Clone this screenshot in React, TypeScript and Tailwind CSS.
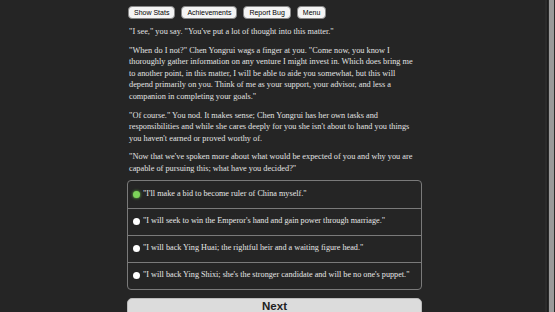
import React from 'react';

const paragraphs = [
  '"I see," you say. "You\'ve put a lot of thought into this matter."',
  '"When do I not?" Chen Yongrui wags a finger at you. "Come now, you know I thoroughly gather information on any venture I might invest in. Which does bring me to another point, in this matter, I will be able to aide you somewhat, but this will depend primarily on you. Think of me as your support, your advisor, and less a companion in completing your goals."',
  '"Of course." You nod. It makes sense; Chen Yongrui has her own tasks and responsibilities and while she cares deeply for you she isn\'t about to hand you things you haven\'t earned or proved worthy of.',
  '"Now that we\'ve spoken more about what would be expected of you and why you are capable of pursuing this; what have you decided?"',
];

const choices = [
  '"I\'ll make a bid to become ruler of China myself."',
  '"I will seek to win the Emperor\'s hand and gain power through marriage."',
  '"I will back Ying Huai; the rightful heir and a waiting figure head."',
  '"I will back Ying Shixi; she\'s the stronger candidate and will be no one\'s puppet."',
];

export default function App() {
  return (
    <div className="flex h-[312px] w-full overflow-hidden bg-[#252525]">
      <div className="flex-1 overflow-hidden">
        <div className="ml-[127px] w-[295px] pt-[6px]">
          <div className="flex gap-[6px] pl-px font-['Liberation_Sans',sans-serif] text-[7px] text-black">
            {['Show Stats', 'Achievements', 'Report Bug', 'Menu'].map((b) => (
              <button
                key={b}
                className="h-[13px] rounded-[4px] border border-[#888] bg-[#f4f4f4] px-[5px] leading-none"
              >
                {b}
              </button>
            ))}
          </div>

          <div className="mt-[7px] space-y-[7px] px-[2px] font-['Liberation_Serif',serif] text-[8.3px] leading-[11.6px] text-[#e2e2e2]">
            {paragraphs.map((p, i) => (
              <p key={i}>{p}</p>
            ))}
          </div>

          <div className="mt-[5px] rounded-[4px] border border-[#7a7a7a] font-['Liberation_Serif',serif] text-[8.2px] text-[#e6e6e6]">
            {choices.map((c, i) => (
              <div
                key={i}
                className={`flex h-[27px] items-center gap-[3px] pl-[5px] ${i > 0 ? 'border-t border-[#7a7a7a]' : ''}`}
              >
                {i === 0 ? (
                  <span className="h-[7px] w-[7px] rounded-full bg-[#7dd35a] shadow-[0_0_3px_#6fcf4a]" />
                ) : (
                  <span className="h-[7px] w-[7px] rounded-full bg-white" />
                )}
                <span>{c}</span>
              </div>
            ))}
          </div>

          <button className="mt-[8px] h-[24px] w-full rounded-[5px] border border-[#bbb] bg-[#dcdcdc] pb-[8px] pt-[2px] font-['Liberation_Sans',sans-serif] text-[11.5px] font-bold leading-none text-[#222]">
            Next
          </button>
        </div>
      </div>
      <div className="flex w-[10px] bg-[#2b2b2b]">
        <div className="ml-[2px] w-[1px] bg-[#1c1c1c]" />
        <div className="ml-[1px] h-full w-[5px] bg-[#9a9a9a]" />
      </div>
    </div>
  );
}
